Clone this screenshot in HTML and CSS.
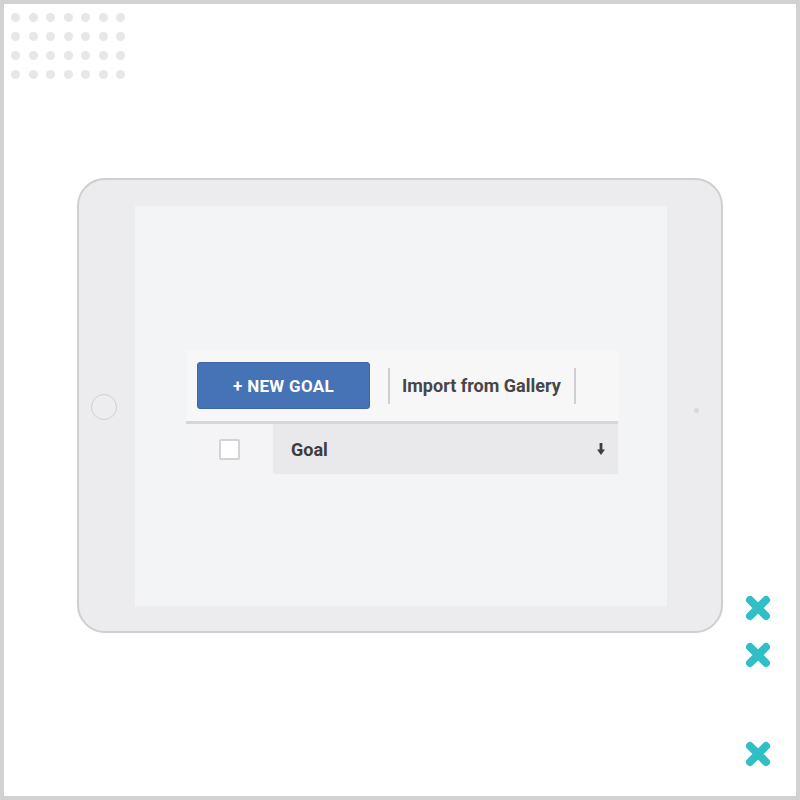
FILE: index.html
```html
<!DOCTYPE html>
<html>
<head>
<meta charset="utf-8">
<link rel="stylesheet" href="styles.css">
</head>
<body>
<div class="frame">
  <div class="dots">
    <span></span><span></span><span></span><span></span><span></span><span></span><span></span>
    <span></span><span></span><span></span><span></span><span></span><span></span><span></span>
    <span></span><span></span><span></span><span></span><span></span><span></span><span></span>
    <span></span><span></span><span></span><span></span><span></span><span></span><span></span>
  </div>
  <div class="ipad">
    <div class="home"></div>
    <div class="screen">
      <div class="panel">
        <div class="toolbar">
          <button class="btn-new">+ NEW GOAL</button>
          <div class="divider"></div>
          <span class="import">Import from Gallery</span>
          <div class="divider"></div>
        </div>
        <div class="header">
          <div class="check-cell"><div class="checkbox"></div></div>
          <div class="goal-cell"><span>Goal</span>
            <svg class="arrow" width="8" height="12" viewBox="0 0 8 12"><path d="M2.6 0 H5.4 V6.5 H8 L4 12 L0 6.5 H2.6 Z" fill="#3e3e40"/></svg>
          </div>
        </div>
      </div>
    </div>
    <div class="camera"></div>
  </div>
  <div class="crosses">
    <svg class="x1" width="26" height="26" viewBox="0 0 26 26"><path d="M5 5 L21 21 M21 5 L5 21" stroke="#2fbfc5" stroke-width="8" stroke-linecap="round"/></svg>
    <svg class="x2" width="26" height="26" viewBox="0 0 26 26"><path d="M5 5 L21 21 M21 5 L5 21" stroke="#2fbfc5" stroke-width="8" stroke-linecap="round"/></svg>
    <svg class="x3" width="26" height="26" viewBox="0 0 26 26"><path d="M5 5 L21 21 M21 5 L5 21" stroke="#2fbfc5" stroke-width="8" stroke-linecap="round"/></svg>
  </div>
</div>
</body>
</html>
```
FILE: styles.css
```css
html, body { margin: 0; padding: 0; }
body { width: 800px; height: 800px; font-family: Roboto, "Liberation Sans", sans-serif; }
.frame {
  position: relative;
  width: 800px; height: 800px;
  box-sizing: border-box;
  border: 4px solid #d2d2d4;
  background: #ffffff;
}
.dots {
  position: absolute; left: 7px; top: 9px;
  display: grid;
  grid-template-columns: repeat(7, 9px);
  grid-auto-rows: 9px;
  column-gap: 8.5px; row-gap: 10px;
}
.dots span { width: 9px; height: 9px; border-radius: 50%; background: #e7e7e9; }
.ipad {
  position: absolute; left: 73px; top: 174px;
  width: 646px; height: 455px;
  box-sizing: border-box;
  border: 2px solid #cfcfd2;
  border-radius: 28px;
  background: #ececee;
}
.home {
  position: absolute; left: 12px; top: 214px;
  width: 26px; height: 26px; box-sizing: border-box;
  border: 1.5px solid #cfcfd2; border-radius: 50%;
  background: #ededef;
}
.camera {
  position: absolute; left: 615px; top: 228px;
  width: 5px; height: 5px; border-radius: 50%; background: #d9d9db;
}
.screen {
  position: absolute; left: 56px; top: 26px;
  width: 532px; height: 400px;
  background: #f3f4f6;
}
.panel {
  position: absolute; left: 51px; top: 144px;
  width: 432px;
}
.toolbar {
  height: 71px; background: #f7f7f8;
  display: flex; align-items: center;
  padding-left: 11px;
  border-bottom: 3px solid #d6d6d8;
}
.btn-new {
  width: 173px; height: 47px;
  background: #4672b6; color: #fff;
  border: 1px solid #3d66a8; border-radius: 3px;
  font-family: Roboto, "Liberation Sans", sans-serif;
  font-weight: 700; font-size: 17px; letter-spacing: 0.3px;
  padding: 0;
}
.divider { width: 2px; height: 36px; background: #cfcfd1; }
.btn-new + .divider { margin-left: 18px; }
.import {
  margin: 0 13px 0 12px;
  font-size: 18px; font-weight: 700; color: #464648;
}
.header { display: flex; height: 50px; }
.check-cell {
  width: 87px; background: #f4f4f6;
  display: flex; align-items: center; justify-content: center;
}
.checkbox {
  width: 21px; height: 21px; box-sizing: border-box;
  border: 2px solid #d3d3d5; border-radius: 2px; background: #fff;
  margin-left: -1px;
}
.goal-cell {
  flex: 1; background: #e9e9eb;
  display: flex; align-items: center; justify-content: space-between;
  padding: 0 13px 0 18px;
  font-size: 18px; font-weight: 700; color: #3c3c3e;
}
.arrow { display: block; }
.crosses svg { position: absolute; left: 741px; }
.x1 { top: 591px; }
.x2 { top: 638px; }
.x3 { top: 737px; }
```
